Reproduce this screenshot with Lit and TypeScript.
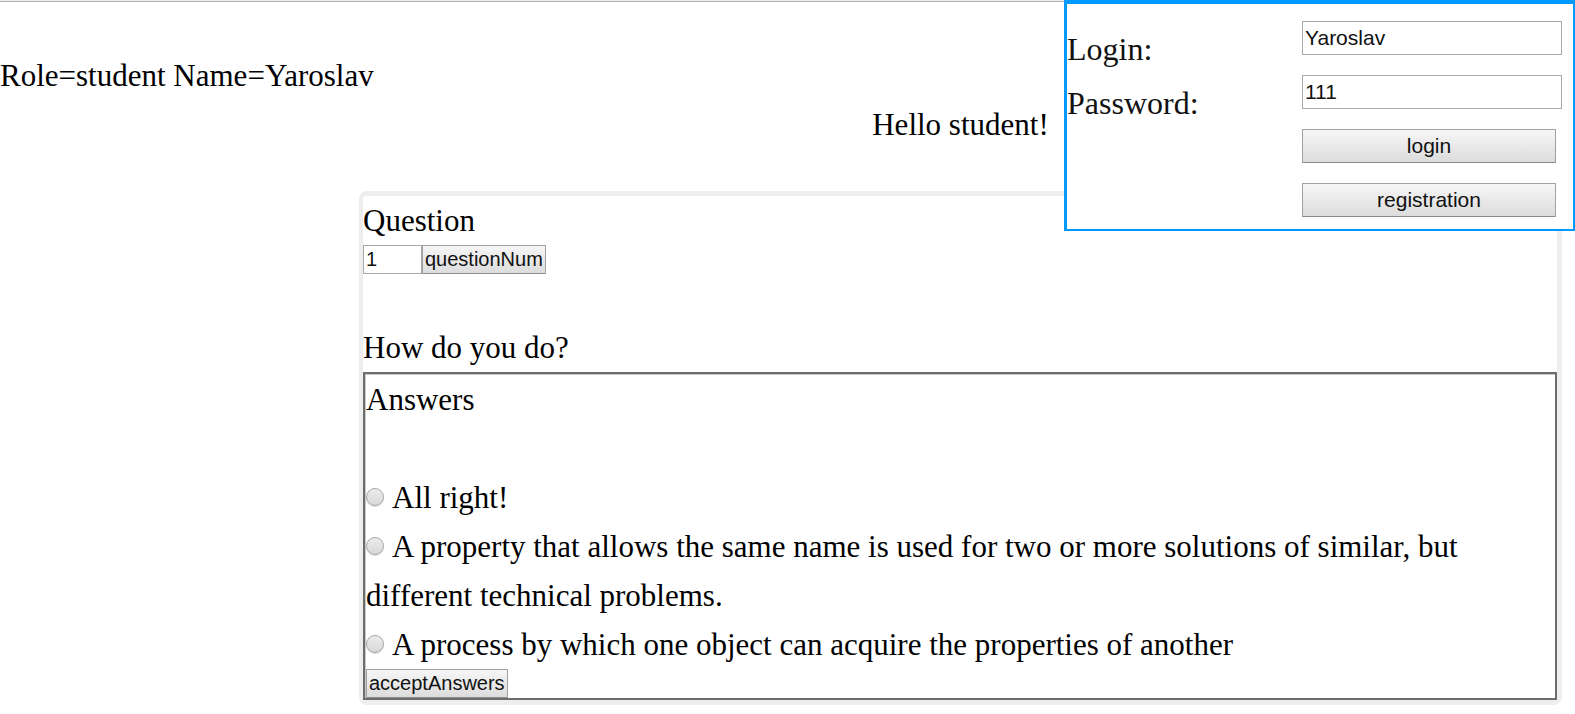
import { LitElement, html, css } from "lit";
import { customElement, property, state } from "lit/decorators.js";

const controlStyles = css`
  * {
    box-sizing: border-box;
  }
  input,
  button {
    font-family: "Liberation Sans", Arial, sans-serif;
    color: #111;
    margin: 0;
    border-radius: 0;
  }
  .field {
    border: 1px solid #a9a9a9;
    background: #fff;
    padding: 0 2px;
  }
  .button {
    border: 1px solid #a0a0a0;
    border-bottom-color: #8c8c8c;
    border-radius: 1px;
    background: linear-gradient(#f6f6f6, #dcdcdc);
    padding: 0 2px;
    white-space: nowrap;
  }
`;

@customElement("login-panel")
export class LoginPanel extends LitElement {
  @property() name = "";
  @property() password = "";

  static styles = [
    controlStyles,
    css`
      :host {
        display: block;
      }
      .panel {
        display: flex;
        background: #fff;
        border: solid #0099ff;
        border-width: 4px 2px 2px 3px;
        padding: 17px 11px 11px 0;
      }
      .labels,
      .fields {
        display: flex;
        flex-direction: column;
      }
      .labels {
        flex: 1;
        gap: 20px;
        padding-top: 11px;
        font-size: 32px;
        line-height: 34px;
        color: #111;
      }
      .fields {
        gap: 20px;
        width: 260px;
      }
      .field,
      .button {
        height: 34px;
        font-size: 21px;
      }
      .button {
        margin-right: 6px;
      }
      .fields {
        padding-bottom: 1px;
      }
    `,
  ];

  render() {
    return html`
      <form class="panel" @submit=${(e: Event) => e.preventDefault()}>
        <div class="labels">
          <label for="login">Login:</label>
          <label for="password">Password:</label>
        </div>
        <div class="fields">
          <input class="field" id="login" type="text" .value=${this.name} />
          <input class="field" id="password" type="text" .value=${this.password} />
          <button class="button" type="submit">login</button>
          <button class="button" type="button">registration</button>
        </div>
      </form>
    `;
  }
}

@customElement("question-card")
export class QuestionCard extends LitElement {
  @property() question = "";
  @property({ attribute: false }) answers: string[] = [];

  static styles = [
    controlStyles,
    css`
      :host {
        display: block;
      }
      .card {
        border: solid #eee;
        border-width: 5px 5px 5px 4px;
        border-radius: 8px;
      }
      .picker {
        display: flex;
        margin-bottom: 49px;
      }
      .field,
      .button {
        height: 29px;
        font-size: 20px;
      }
      .field {
        width: 59px;
      }
      .answers {
        margin: 0;
        padding: 1px 0 0 1px;
        border: 2px solid #6d6d6d;
        box-shadow: inset 1px 1px #c8c8c8;
      }
      .title {
        margin-bottom: 49px;
      }
      .radio {
        appearance: none;
        width: 18px;
        height: 18px;
        margin-right: 2px;
        vertical-align: 2px;
        border: 1px solid #a8a8a8;
        border-radius: 50%;
        background: linear-gradient(#ececec, #d8d8d8);
        box-shadow: 0 1px 1px #ddd;
      }
      .radio:checked {
        background: radial-gradient(#444 35%, #e4e4e4 40%);
      }
      .answers .button {
        display: block;
      }
    `,
  ];

  render() {
    return html`
      <section class="card">
        <label for="number">Question</label>
        <div class="picker">
          <input class="field" id="number" type="text" value="1" />
          <button class="button" type="button">questionNum</button>
        </div>
        <div id="question">${this.question}</div>
        <form class="answers" aria-labelledby="question" @submit=${(e: Event) => e.preventDefault()}>
          <div class="title">Answers</div>
          ${this.answers.map(
            (text, i) => html`<div>
              <input class="radio" id="answer-${i}" type="radio" name="answer" />
              <label for="answer-${i}">${text}</label>
            </div>`
          )}
          <button class="button" type="submit">acceptAnswers</button>
        </form>
      </section>
    `;
  }
}

@customElement("app-root")
export class AppRoot extends LitElement {
  @state() private role = "student";
  @state() private userName = "Yaroslav";

  private answers = [
    "All right!",
    "A property that allows the same name is used for two or more solutions of similar, but different technical problems.",
    "A process by which one object can acquire the properties of another",
  ];

  static styles = css`
    :host {
      display: block;
      position: relative;
      background: #fff;
      color: #000;
      border-top: 1px solid #eee;
      font-family: "Liberation Serif", "Times New Roman", serif;
      font-size: 31px;
      line-height: 49px;
    }
    .status {
      border-top: 1px solid #b0b0b0;
      padding-top: 49px;
    }
    .content {
      margin: 0 13px 9px 359px;
    }
    .greeting {
      margin-bottom: 42px;
      text-align: center;
    }
    .login {
      position: absolute;
      top: -1px;
      right: 0;
      width: 511px;
      max-width: 100%;
    }
  `;

  render() {
    return html`
      <header class="status">Role=${this.role} Name=${this.userName}</header>
      <main class="content">
        <div class="greeting">Hello ${this.role}!</div>
        <question-card question="How do you do?" .answers=${this.answers}></question-card>
      </main>
      <login-panel class="login" name=${this.userName} password="111"></login-panel>
    `;
  }
}
